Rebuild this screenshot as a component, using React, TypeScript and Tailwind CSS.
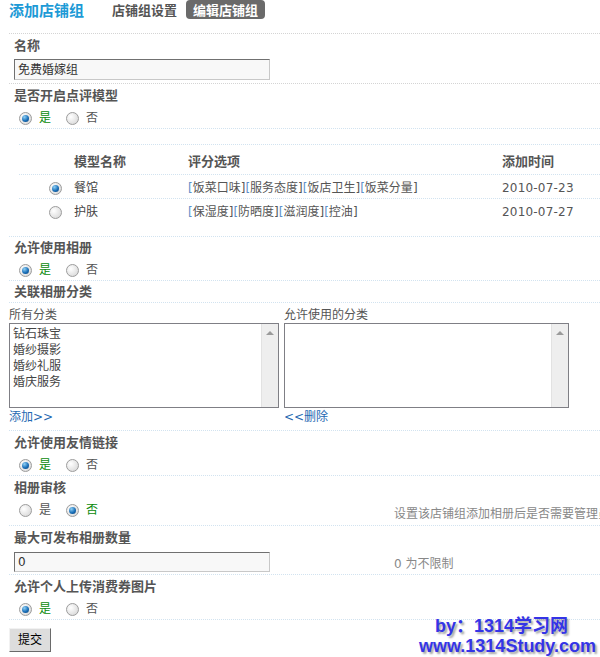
import React from "react";

function Radio({ checked }: { checked?: boolean }) {
  return (
    <span className="inline-flex h-[13px] w-[13px] shrink-0 items-center justify-center rounded-full border border-[#9c9c9c] bg-[radial-gradient(circle_at_35%_35%,#ffffff,#d2d2d2)]">
      {checked && (
        <span className="h-[7px] w-[7px] rounded-full bg-[radial-gradient(circle_at_35%_30%,#8fd0f5,#1a6fb8_55%,#073d73)]" />
      )}
    </span>
  );
}

function YesNo({ yes }: { yes: boolean }) {
  return (
    <div className="flex h-[20px] items-center pl-[10px] text-[12px]">
      <Radio checked={yes} />
      <span className={yes ? "ml-[7px] text-[#0a8a0a]" : "ml-[7px] text-[#555]"}>是</span>
      <span className="ml-[15px] flex items-center">
        <Radio checked={!yes} />
      </span>
      <span className={!yes ? "ml-[7px] text-[#0a8a0a]" : "ml-[7px] text-[#555]"}>否</span>
    </div>
  );
}

function Label({ children }: { children: React.ReactNode }) {
  return <div className="h-[20px] pl-[5px] text-[13px] font-bold leading-[20px] text-[#555]">{children}</div>;
}

function ListBox({ width, items }: { width: string; items: string[] }) {
  return (
    <div className={`flex h-[85px] border border-[#7f7f85] bg-white ${width}`}>
      <div className="flex-1 pl-[3px] pt-[2px] text-[12px] leading-[16px] text-[#444]">
        {items.map((it) => (
          <div key={it}>{it}</div>
        ))}
      </div>
      <div className="flex w-[17px] flex-col items-center border-l border-[#e2e2e2] bg-[#eeeeee] pt-[7px]">
        <div className="h-0 w-0 border-x-[4px] border-b-[4px] border-x-transparent border-b-[#9a9a9a]" />
      </div>
    </div>
  );
}

function Bracketed({ items }: { items: string[] }) {
  return (
    <span>
      {items.map((it) => (
        <span key={it}>
          <span className="text-[#5d8fc8]">[</span>
          <span className="text-[#555]">{it}</span>
          <span className="text-[#555]">]</span>
        </span>
      ))}
    </span>
  );
}

export default function App() {
  const sec = "ml-[9px] border-b border-dotted border-[#d2e3f0]";
  return (
    <div className="relative h-[657px] w-[600px] overflow-hidden bg-white font-['DejaVu_Sans','Noto_Sans_CJK_SC',sans-serif] text-[12px] text-[#555]">
      {/* header */}
      <div className="ml-[9px] flex h-[34px] items-start border-b border-dotted border-[#d4d4d4]">
        <div className="mt-[1px] text-[15px] font-bold leading-[20px] text-[#1d9ad6]">添加店铺组</div>
        <div className="ml-[28px] mt-[2px] text-[13px] font-bold leading-[18px] text-[#555]">店铺组设置</div>
        <div className="ml-[9px] h-[19px] rounded-[4px] bg-[#6a6a6a] px-[7px] pt-[2px] text-[13px] font-bold leading-[17px] text-white">
          编辑店铺组
        </div>
      </div>

      {/* 名称 */}
      <div className="ml-[9px] border-b border-dotted border-[#d4d4d4] pb-[3px] pt-[2px]">
        <Label>名称</Label>
        <div className="ml-[5px] mt-[3px] flex h-[21px] w-[256px] items-center border border-b-[#c8c8c8] border-l-[#707070] border-r-[#c8c8c8] border-t-[#707070] bg-[#f8f8f8] pl-[3px] text-[12px] text-[#333]">
          免费婚嫁组
        </div>
      </div>

      {/* 是否开启点评模型 */}
      <div className={`${sec} pt-[2px]`}>
        <Label>是否开启点评模型</Label>
        <div className="mt-[2px]">
          <YesNo yes={true} />
        </div>
      </div>

      {/* table */}
      <div className={sec}>
        <div className="mb-[14px] ml-[10px] mt-[15px]">
          <div className="grid h-[31px] grid-cols-[55px_114px_314px_1fr] border-y border-dotted border-[#d2e3f0] pt-[7px] text-[13px] font-bold leading-[20px] text-[#555]">
            <div />
            <div>模型名称</div>
            <div>评分选项</div>
            <div>添加时间</div>
          </div>
          <div className="grid h-[24px] grid-cols-[55px_114px_314px_1fr] border-b border-dotted border-[#d2e3f0] pt-[4px] leading-[18px]">
            <div className="flex items-center pl-[30px]">
              <Radio checked />
            </div>
            <div className="text-[#444]">餐馆</div>
            <div className="whitespace-nowrap">
              <Bracketed items={["饭菜口味", "服务态度", "饭店卫生", "饭菜分量"]} />
            </div>
            <div className="tracking-[0.2px] text-[#555]">2010-07-23</div>
          </div>
          <div className="grid h-[23px] grid-cols-[55px_114px_314px_1fr] pt-[4px] leading-[18px]">
            <div className="flex items-center pl-[30px]">
              <Radio />
            </div>
            <div className="text-[#444]">护肤</div>
            <div className="whitespace-nowrap">
              <Bracketed items={["保湿度", "防晒度", "滋润度", "控油"]} />
            </div>
            <div className="tracking-[0.2px] text-[#555]">2010-07-27</div>
          </div>
        </div>
      </div>

      {/* 允许使用相册 */}
      <div className={`${sec} pt-[1px]`}>
        <Label>允许使用相册</Label>
        <div className="mt-[2px]">
          <YesNo yes={true} />
        </div>
      </div>

      {/* 关联相册分类 */}
      <div className={`${sec} pt-[1px]`}>
        <Label>关联相册分类</Label>
      </div>

      {/* lists */}
      <div className={`${sec} flex pb-[4px] pt-[4px]`}>
        <div className="w-[275px] shrink-0">
          <div className="h-[16px] leading-[16px] text-[#555]">所有分类</div>
          <ListBox width="w-[270px]" items={["钻石珠宝", "婚纱摄影", "婚纱礼服", "婚庆服务"]} />
          <div className="h-[18px] leading-[18px] text-[#2468b2]">添加&gt;&gt;</div>
        </div>
        <div>
          <div className="h-[16px] leading-[16px] text-[#555]">允许使用的分类</div>
          <ListBox width="w-[285px]" items={[]} />
          <div className="h-[18px] leading-[18px] text-[#2468b2]">&lt;&lt;删除</div>
        </div>
      </div>

      {/* 允许使用友情链接 */}
      <div className={`${sec} pt-[2px]`}>
        <Label>允许使用友情链接</Label>
        <div className="mt-[2px]">
          <YesNo yes={true} />
        </div>
      </div>

      {/* 相册审核 */}
      <div className={`${sec} pb-[5px] pt-[2px]`}>
        <Label>相册审核</Label>
        <div className="mt-[2px] flex h-[20px] items-start">
          <div className="w-[385px] shrink-0">
            <YesNo yes={false} />
          </div>
          <div className="shrink-0 whitespace-nowrap pt-[4px] leading-[20px] text-[#888]">设置该店铺组添加相册后是否需要管理员审核</div>
        </div>
      </div>

      {/* 最大可发布相册数量 */}
      <div className={`${sec} pb-[2px] pt-[2px]`}>
        <Label>最大可发布相册数量</Label>
        <div className="mt-[4px] flex h-[20px] items-start">
          <div className="w-[385px] shrink-0">
            <div className="ml-[5px] flex h-[20px] w-[256px] items-center border border-b-[#c8c8c8] border-l-[#707070] border-r-[#c8c8c8] border-t-[#707070] bg-[#f8f8f8] pl-[3px] text-[12px] text-[#333]">
              0
            </div>
          </div>
          <div className="shrink-0 whitespace-nowrap pt-[2px] leading-[20px] text-[#888]">0 为不限制</div>
        </div>
      </div>

      {/* 允许个人上传消费券图片 */}
      <div className={`${sec} pt-[2px]`}>
        <Label>允许个人上传消费券图片</Label>
        <div className="mt-[2px]">
          <YesNo yes={true} />
        </div>
      </div>

      <div className="ml-[9px] mt-[8px]">
        <button className="flex h-[24px] w-[42px] items-center justify-center border border-b-[#6a6a6a] border-l-[#f2f2f2] border-r-[#6a6a6a] border-t-[#f2f2f2] bg-[#dddddd] text-[12px] text-black">
          提交
        </button>
      </div>

      {/* watermark */}
      <div className="absolute left-[435px] top-[616px] whitespace-nowrap font-['Liberation_Sans','Noto_Sans_CJK_SC',sans-serif] text-[18px] font-bold leading-[20px] text-[#3434e6] [text-shadow:2px_2px_2px_rgba(0,0,0,0.35)]">
        by：1314学习网
      </div>
      <div className="absolute left-[419px] top-[636px] whitespace-nowrap font-['Liberation_Sans',sans-serif] text-[18px] font-bold leading-[20px] text-[#3434e6] [text-shadow:2px_2px_2px_rgba(0,0,0,0.35)]">
        www.1314Study.com
      </div>
    </div>
  );
}
